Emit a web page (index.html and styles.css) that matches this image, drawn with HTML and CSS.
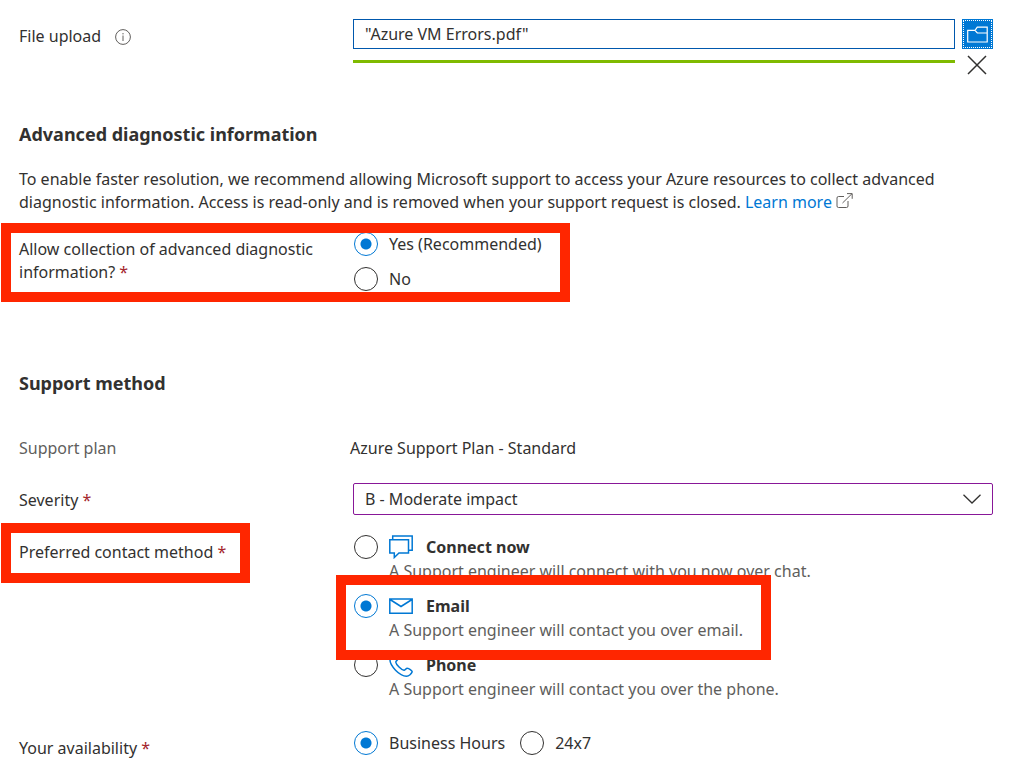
FILE: index.html
```html
<!DOCTYPE html>
<html lang="en">
<head>
<meta charset="utf-8">
<title>New support request</title>
<link rel="stylesheet" href="styles.css">
</head>
<body>
<form class="request">
  <div class="row">
    <div class="label label-with-icon">
      <label for="file">File upload</label>
      <svg class="info-icon" width="16" height="16" viewBox="0 0 16 16" fill="none" stroke="#605e5c"><circle cx="8" cy="8" r="7.4"/><path d="M8 6.5v5.5M8 4v1.4"/></svg>
    </div>
    <div class="control upload">
      <input class="text-box" id="file" type="text" value="&quot;Azure VM Errors.pdf&quot;" readonly>
      <button class="browse" type="button" aria-label="Browse files">
        <svg width="21" height="17" viewBox="0 0 21 17" fill="none" stroke="#fff" stroke-width="1.2"><path d="M.7 4.3H8L10.300 1.200H20.200V16H.7zM8 4.300L10.300 7H20.200"/></svg>
      </button>
      <div class="progress"></div>
      <button class="remove" type="button" aria-label="Remove file">
        <svg width="20" height="20" viewBox="0 0 20 20" fill="none" stroke="#323130" stroke-width="1.5"><path d="M1 1l18 18M19 1L1 19"/></svg>
      </button>
    </div>
  </div>

  <h2 class="heading heading-diagnostic">Advanced diagnostic information</h2>
  <p class="description">To enable faster resolution, we recommend allowing Microsoft support to access your Azure resources to collect advanced diagnostic information. Access is read-only and is removed when your support request is closed. <a class="link" href="#">Learn more</a> <svg class="external-icon" width="17" height="16" viewBox="0 0 17 16" fill="none" stroke="#605e5c"><path d="M8 3.500H2.500a1.500 1.500 0 0 0-1.500 1.500v8a1.500 1.500 0 0 0 1.500 1.500H10.500a1.500 1.500 0 0 0 1.500-1.500V8M6.500 10L16 .7M11 .6h5.200v5.200"/></svg></p>

  <div class="row row-collection" role="radiogroup" aria-labelledby="collection-label">
    <div class="label" id="collection-label">Allow collection of advanced diagnostic information? <span class="required">*</span></div>
    <div class="control options">
      <label class="choice"><input class="radio" type="radio" name="collection" checked>Yes (Recommended)</label>
      <label class="choice"><input class="radio" type="radio" name="collection">No</label>
    </div>
    <div class="highlight highlight-collection"></div>
  </div>

  <h2 class="heading heading-support">Support method</h2>

  <div class="row row-plan">
    <div class="plan-label">Support plan</div>
    <div>Azure Support Plan - Standard</div>
  </div>

  <div class="row row-severity">
    <label class="label" for="severity">Severity <span class="required">*</span></label>
    <div class="control select-wrap">
      <select class="select" id="severity"><option>B - Moderate impact</option></select>
      <svg class="chevron" width="18" height="10" viewBox="0 0 18 10" fill="none" stroke="#323130" stroke-width="1.300"><path d="M.5.8L9 9L17.500.8"/></svg>
    </div>
  </div>

  <div class="row row-contact" role="radiogroup" aria-labelledby="contact-label">
    <div class="label" id="contact-label">Preferred contact method <span class="required">*</span></div>
    <div class="control options">
      <div class="method">
        <label class="choice">
          <input class="radio" type="radio" name="contact">
          <svg class="method-icon" width="24" height="24" viewBox="0 0 24 24" fill="none" stroke="#0078d4" stroke-width="1.500"><path d="M3.700 4V1H23.200v14.300H19.500M.8 4.700H19.500V18H10L5.300 22.500V18H.8z"/></svg>
          <strong>Connect now</strong>
        </label>
        <div class="hint">A Support engineer will connect with you now over chat.</div>
      </div>
      <div class="method">
        <label class="choice">
          <input class="radio" type="radio" name="contact" checked>
          <svg class="method-icon" width="24" height="24" viewBox="0 0 24 24" fill="none" stroke="#0078d4" stroke-width="1.500"><path d="M.8 5H23.200V19.200H.8zM1 5.500L12 12.500L23 5.500"/></svg>
          <strong>Email</strong>
        </label>
        <div class="hint">A Support engineer will contact you over email.</div>
        <div class="highlight highlight-email"></div>
      </div>
      <div class="method">
        <label class="choice">
          <input class="radio" type="radio" name="contact">
          <svg class="method-icon" width="24" height="24" viewBox="0 0 24 24" fill="none" stroke="#0078d4" stroke-width="1.500"><path d="M5.500 1C4.500 1 1 3.500.9 6.200C.8 13 10.500 23 17.500 23.200C20 23.200 22.500 20.700 23.200 18.800C23.400 17.800 19.500 15.300 18.500 15.200C17 15 16.200 17.500 15 17.300C12.500 17 7 11.500 6.800 9.200C6.700 8 9 7.200 8.800 5.800C8.600 4.500 6.500 1 5.500 1z"/></svg>
          <strong>Phone</strong>
        </label>
        <div class="hint">A Support engineer will contact you over the phone.</div>
      </div>
    </div>
    <div class="highlight highlight-contact"></div>
  </div>

  <div class="row row-availability" role="radiogroup" aria-labelledby="availability-label">
    <div class="label" id="availability-label">Your availability <span class="required">*</span></div>
    <div class="control inline-options">
      <label class="choice"><input class="radio" type="radio" name="availability" checked>Business Hours</label>
      <label class="choice"><input class="radio" type="radio" name="availability">24x7</label>
    </div>
  </div>
</form>
</body>
</html>
```

FILE: styles.css
```css
* {
  box-sizing: border-box;
}

body {
  margin: 0;
  background: #fff;
  color: #323130;
  font: 16px/23px "Noto Sans", "Open Sans", sans-serif;
}

input,
select,
button {
  margin: 0;
  color: inherit;
  font: inherit;
}

.request {
  padding: 19px 35px 15px 19px;
}

.row {
  position: relative;
  display: grid;
  grid-template-columns: 331px minmax(0, 1fr);
}

.label {
  padding: 6px 12px 0 0;
}

.label-with-icon {
  display: flex;
  align-items: center;
  align-self: start;
  gap: 14px;
}

.control {
  padding-left: 3px;
}

.required {
  color: #a4262c;
}

.upload {
  display: grid;
  grid-template-columns: minmax(0, 1fr) 31px;
  gap: 5px 7px;
}

.text-box {
  width: 100%;
  height: 30px;
  padding: 0 11px;
  border: 1px solid #0058ad;
  background: #fff;
  outline: none;
}

.browse {
  display: grid;
  place-items: center;
  height: 30px;
  padding: 0;
  border: 1px solid #0078d4;
  background: #0078d4;
  outline: 1px dotted #fff;
  outline-offset: -2px;
}

.progress {
  height: 3px;
  margin-top: 6px;
  background: #7fba00;
}

.remove {
  display: grid;
  place-items: center;
  width: 30px;
  height: 22px;
  padding: 0;
  border: 0;
  background: none;
}

.heading {
  margin: 0;
  font-size: 18px;
  font-weight: 700;
  line-height: 23px;
}

.heading-diagnostic {
  margin-top: 47px;
}

.description {
  margin: 22px 0 0;
}

.link {
  color: #0078d4;
  text-decoration: none;
}

.external-icon {
  vertical-align: -1px;
}

.row-collection {
  margin-top: 18px;
}

.options {
  display: grid;
  gap: 11px;
  padding-left: 4px;
}

.choice {
  display: flex;
  align-items: center;
  justify-self: start;
  gap: 11px;
  height: 24px;
}

.radio {
  flex: none;
  appearance: none;
  width: 24px;
  height: 24px;
  border: 1px solid #323130;
  border-radius: 50%;
  background: #fff;
}

.radio:checked {
  border-color: #0078d4;
  background: radial-gradient(circle, #0078d4 5px, #fff 6px);
}

.heading-support {
  margin-top: 81px;
}

.row-plan {
  margin-top: 42px;
}

.plan-label {
  color: #605e5c;
}

.row-severity {
  margin-top: 23px;
}

.select-wrap {
  position: relative;
}

.select {
  display: block;
  appearance: none;
  width: 100%;
  height: 32px;
  padding: 0 36px 0 11px;
  border: 1px solid #881798;
  border-radius: 2px;
  background: #fff;
}

.chevron {
  position: absolute;
  top: 11px;
  right: 12px;
  pointer-events: none;
}

.row-contact {
  margin-top: 20px;
}

.method {
  position: relative;
  display: grid;
  gap: 1px;
}

.method-icon {
  flex: none;
  margin-right: 2px;
}

.hint {
  padding-left: 35px;
  color: #605e5c;
}

.row-availability {
  margin-top: 30px;
}

.inline-options {
  display: flex;
  gap: 15px;
  padding-left: 4px;
}

/* Marker frames drawn over the form */
.highlight {
  position: absolute;
  z-index: 1;
  border: 10px solid #ff2600;
  pointer-events: none;
}

.highlight-collection {
  top: -9px;
  left: -18px;
  width: 569px;
  height: 79px;
}

.highlight-contact {
  top: -12px;
  left: -18px;
  width: 249px;
  height: 60px;
}

.highlight-email {
  top: -19px;
  left: -18px;
  width: 435px;
  height: 85px;
}
```
